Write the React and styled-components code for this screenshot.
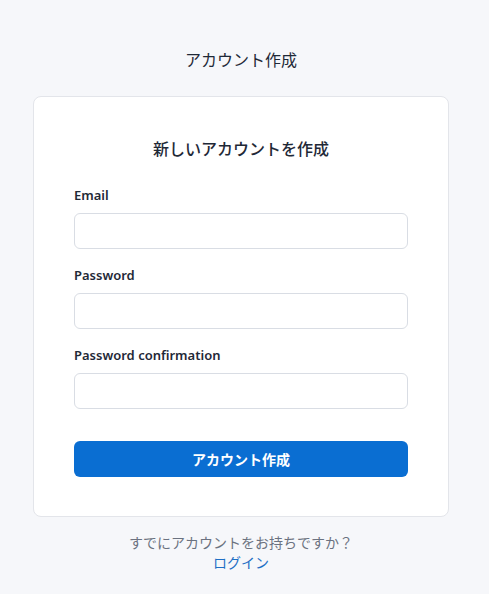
import React from "react";
import styled, { createGlobalStyle } from "styled-components";

const Global = createGlobalStyle`
  html, body { margin: 0; padding: 0; background: #f6f7fa; }
  body { font-family: "Noto Sans", "Noto Sans CJK JP", sans-serif; color: #1f2937; }
  * { box-sizing: border-box; }
`;

const Page = styled.div`
  min-height: 594px;
  padding: 48px 40px 20px 33px;
  display: flex;
  flex-direction: column;
  align-items: stretch;
`;

const PageTitle = styled.h1`
  margin: 0 0 24px;
  font-size: 16px;
  line-height: 24px;
  font-weight: 400;
  text-align: center;
  color: #1f2937;
`;

const Card = styled.div`
  background: #fff;
  border: 1px solid #e3e5ea;
  border-radius: 8px;
  padding: 40px 40px 39px;
  display: flex;
  flex-direction: column;
`;

const CardTitle = styled.h2`
  margin: 0 0 24px;
  font-size: 16px;
  line-height: 24px;
  font-weight: 500;
  text-align: center;
  color: #1f2937;
`;

const Field = styled.div`
  display: flex;
  flex-direction: column;
  gap: 8px;
  margin-bottom: 16px;
`;

const Label = styled.label`
  font-size: 13px;
  line-height: 20px;
  font-weight: 600;
  color: #1f2937;
`;

const Input = styled.input`
  height: 36px;
  border: 1px solid #d9dde4;
  border-radius: 6px;
  padding: 0 10px;
  font-size: 14px;
  font-family: inherit;
  background: #fff;
  outline: none;
`;

const Button = styled.button`
  margin-top: 16px;
  height: 36px;
  border: none;
  border-radius: 6px;
  background: #0a6ed2;
  color: #fff;
  font-family: inherit;
  font-size: 14px;
  font-weight: 600;
  cursor: pointer;
`;

const Footer = styled.div`
  margin-top: 16px;
  text-align: center;
  font-size: 14px;
  line-height: 20px;
  color: #6b7280;
`;

const LoginLink = styled.a`
  display: block;
  color: #1f6fc5;
  text-decoration: none;
`;

export default function App() {
  return (
    <>
      <Global />
      <Page>
        <PageTitle>アカウント作成</PageTitle>
        <Card>
          <CardTitle>新しいアカウントを作成</CardTitle>
          <Field>
            <Label>Email</Label>
            <Input type="email" />
          </Field>
          <Field>
            <Label>Password</Label>
            <Input type="password" />
          </Field>
          <Field>
            <Label>Password confirmation</Label>
            <Input type="password" />
          </Field>
          <Button>アカウント作成</Button>
        </Card>
        <Footer>
          すでにアカウントをお持ちですか？
          <LoginLink href="#">ログイン</LoginLink>
        </Footer>
      </Page>
    </>
  );
}
